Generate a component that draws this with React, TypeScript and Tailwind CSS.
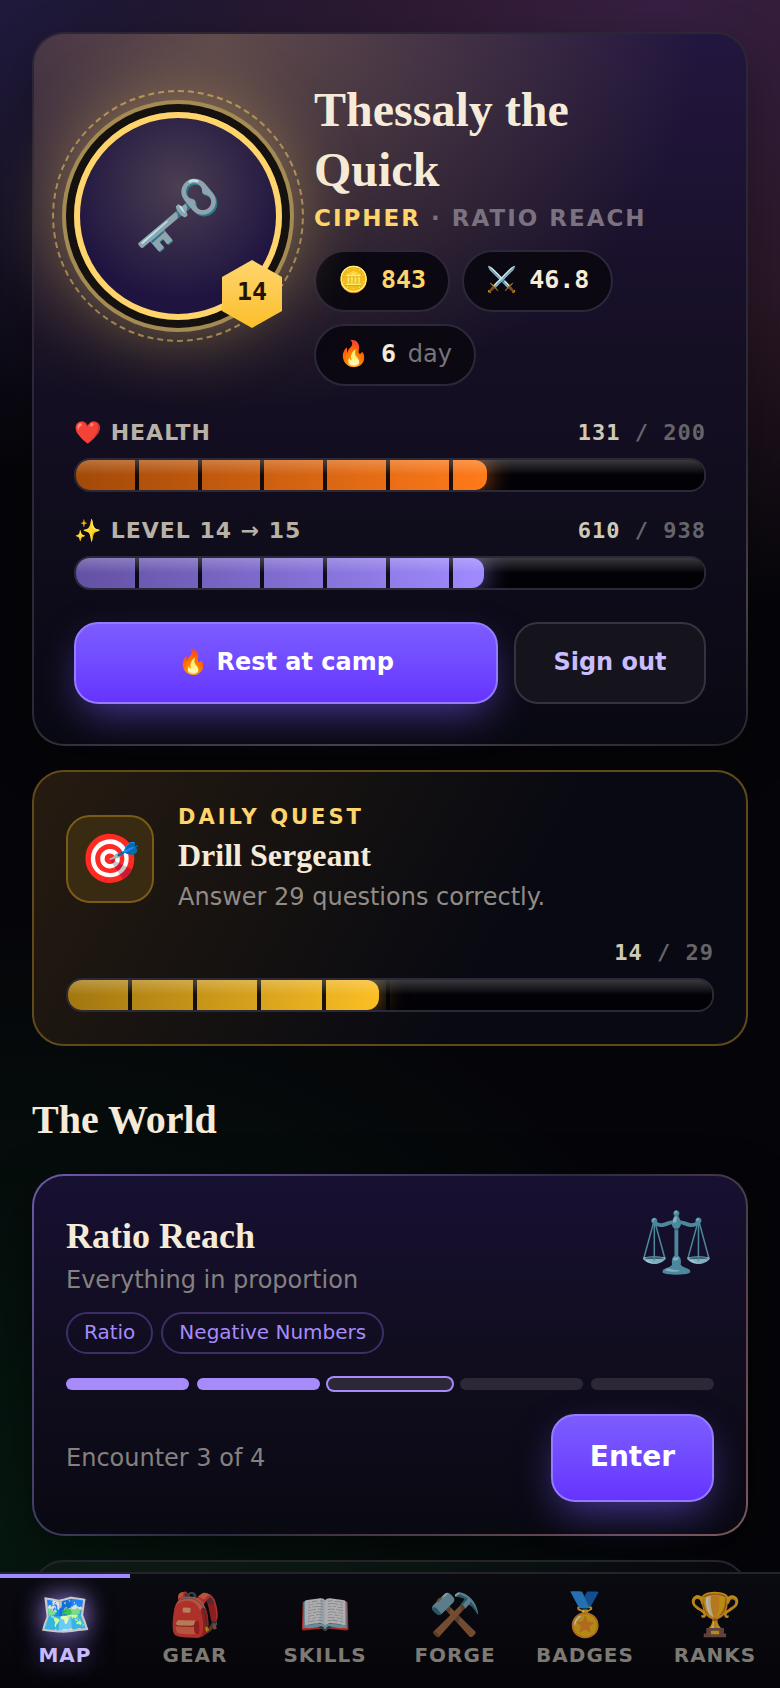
import type { ReactNode } from "react"
import clsx from "clsx"

const stats = [
  { icon: "🪙", value: "843", unit: "", gold: true },
  { icon: "⚔️", value: "46.8", unit: "", gold: false },
  { icon: "🔥", value: "6", unit: "day", gold: false },
]

const tabs = [
  { icon: "🗺️", label: "Map" },
  { icon: "🎒", label: "Gear" },
  { icon: "📖", label: "Skills" },
  { icon: "⚒️", label: "Forge" },
  { icon: "🏅", label: "Badges" },
  { icon: "🏆", label: "Ranks" },
]

const encounters = ["done", "done", "current", "locked", "locked"]

const fills = {
  health: "bg-linear-to-r from-[#a34a08] to-[#ff7a1a] shadow-[0_0_28px_rgba(255,122,26,0.8)]",
  level: "bg-linear-to-r from-[#6351a3] to-[#a08aff] shadow-[0_0_28px_rgba(160,138,255,0.75)]",
  quest: "bg-linear-to-r from-[#a27710] to-[#fbbf24] shadow-[0_0_28px_rgba(251,191,36,0.6)]",
}

function Meter({ label, value, max, tone }: { label?: ReactNode; value: number; max: number; tone: keyof typeof fills }) {
  return (
    <div>
      <div className="mb-2 flex justify-between text-[22px] leading-[34px] font-bold tracking-[1px]">
        <span className="text-[#b8b2a6] uppercase">{label}</span>
        <span className="font-['DejaVu_Sans_Mono',monospace] text-[#66646b]">
          <span className="text-[#cfc9b8]">{value}</span> / {max}
        </span>
      </div>
      <div className="relative h-[34px] overflow-hidden rounded-2xl border-2 border-[#2b2838] bg-[#020106]">
        <div className={clsx("h-full rounded-xl", fills[tone])} style={{ width: `${(value / max) * 100}%` }} />
        <div className="absolute inset-0 bg-[repeating-linear-gradient(90deg,transparent_0,transparent_calc(10%-4px),rgba(2,1,6,0.9)_calc(10%-4px),rgba(2,1,6,0.9)_10%)]" />
        <div className="absolute inset-x-0 top-0 h-1/2 bg-linear-to-b from-white/22 to-transparent" />
      </div>
    </div>
  )
}

function PrimaryButton({ className, children }: { className?: string; children: ReactNode }) {
  return (
    <button
      type="button"
      className={clsx(
        "border-2 border-[#957bff] bg-linear-to-b from-[#7d5cff] to-[#6633ff] pb-[2px] font-bold text-white shadow-[0_16px_40px_-8px_rgba(124,92,255,0.55)]",
        className,
      )}
    >
      {children}
    </button>
  )
}

function HeroCard() {
  return (
    <section className="rounded-[32px] border-2 border-transparent p-10 shadow-[0_16px_48px_rgba(0,0,0,0.3)] [background:radial-gradient(ellipse_480px_380px_at_26%_0%,rgba(255,213,107,0.28),transparent)_padding-box,linear-gradient(180deg,#23163f_0%,#150f24_45%,#090912_100%)_padding-box,linear-gradient(160deg,#2b2535_0%,#2b2938_70%,#4a3f48_85%,#25242f_100%)_border-box]">
      <div className="flex gap-8">
        <div className="relative mt-[38px] size-52 shrink-0">
          <div className="absolute -inset-[22px] rounded-full border-2 border-dashed border-[#ffd56b]/50" />
          <div className="flex size-full items-center justify-center rounded-full border-[6px] border-[#ffd56b] bg-[radial-gradient(circle_at_50%_35%,#4b3f52_0%,#1f1440_70%)] pb-[3px] text-[72px] shadow-[0_0_0_8px_#14110f,0_0_0_12px_#a48b54,0_0_72px_12px_rgba(255,213,107,0.4)]">
            <span aria-hidden="true">🗝️</span>
          </div>
          <div className="absolute right-0 -bottom-2 flex h-[68px] w-[60px] items-center justify-center bg-linear-to-b from-[#ffd56b] to-[#fbbf24] pb-1 font-['DejaVu_Sans_Mono',monospace] text-[25px] font-bold text-[#231503] [clip-path:polygon(50%_0,100%_25%,100%_75%,50%_100%,0_75%,0_25%)]">
            14
          </div>
        </div>
        <div className="min-w-0 pt-[6px]">
          <h1 className="font-['Liberation_Serif',serif] text-5xl leading-[60px] font-bold text-[#f5ebd8]">
            Thessaly the Quick
          </h1>
          <p className="text-[23px] leading-9 font-bold tracking-[2px] text-[#7b7280] uppercase">
            <span className="text-[#ffd56b]">Cipher</span> · Ratio Reach
          </p>
          <ul className="mt-[14px] flex flex-wrap gap-3">
            {stats.map((stat) => (
              <li
                key={stat.icon}
                className="flex h-[62px] items-center gap-3 rounded-full border-2 border-[#2c2739] bg-[#0b0812] px-[22px] pb-[3px] text-[25px]"
              >
                <span aria-hidden="true">{stat.icon}</span>
                <span>
                  <b
                    className={clsx(
                      "font-['DejaVu_Sans_Mono',monospace]",
                      stat.gold ? "text-[#ffd56b]" : "text-[#f5ebd8]",
                    )}
                  >
                    {stat.value}
                  </b>
                  {stat.unit && <span className="ml-1 text-2xl text-[#77747a]"> {stat.unit}</span>}
                </span>
              </li>
            ))}
          </ul>
        </div>
      </div>
      <div className="mt-[30px] flex flex-col gap-[22px]">
        <Meter label="❤️ Health" value={131} max={200} tone="health" />
        <Meter label="✨ Level 14 → 15" value={610} max={938} tone="level" />
      </div>
      <div className="mt-8 flex gap-4">
        <PrimaryButton className="h-[82px] flex-1 rounded-3xl text-2xl">🔥 Rest at camp</PrimaryButton>
        <button
          type="button"
          className="h-[82px] w-48 rounded-3xl border-2 border-[#353340] bg-[#15131c] pb-[2px] text-2xl font-bold text-[#c9bcff]"
        >
          Sign out
        </button>
      </div>
    </section>
  )
}

function QuestCard() {
  return (
    <section className="rounded-[32px] border-2 border-[#614a1a] bg-[#08080f] bg-linear-[120deg,#261b10_0%,#141110_38%,#080912_65%,#090912_100%] p-8">
      <div className="flex items-center gap-6">
        <div className="flex size-[88px] shrink-0 items-center justify-center rounded-3xl border-2 border-[#7a5c17] bg-[#392b12] pb-[3px] text-5xl">
          <span aria-hidden="true">🎯</span>
        </div>
        <div>
          <p className="text-[21px] leading-[26px] font-bold tracking-[3px] text-[#ffd56b] uppercase">Daily quest</p>
          <h2 className="font-['Liberation_Serif',serif] text-[32px] leading-[50px] font-bold text-[#f5ebd8]">
            Drill Sergeant
          </h2>
          <p className="text-2xl leading-[34px] text-[#918c86]">Answer 29 questions correctly.</p>
        </div>
      </div>
      <div className="mt-[22px]">
        <Meter value={14} max={29} tone="quest" />
      </div>
    </section>
  )
}

function RegionCard() {
  return (
    <section className="rounded-[32px] border-2 border-transparent p-8 shadow-[0_16px_48px_rgba(0,0,0,0.5)] [background:linear-gradient(180deg,#171032_0%,#110d1f_50%,#090912_100%)_padding-box,linear-gradient(135deg,#6a5aa8_0%,#2d2a3e_50%,#7d5a5a_100%)_border-box]">
      <div className="flex justify-between">
        <div>
          <h3 className="font-['Liberation_Serif',serif] text-4xl leading-[56px] font-bold text-[#f5ebd8]">
            Ratio Reach
          </h3>
          <p className="text-2xl leading-8 text-[#85817f]">Everything in proportion</p>
        </div>
        <span className="text-[60px] leading-[68px]" aria-hidden="true">
          ⚖️
        </span>
      </div>
      <ul className="mt-4 flex gap-2 text-xl text-[#a78bfa]">
        {["Ratio", "Negative Numbers"].map((topic) => (
          <li key={topic} className="flex h-[42px] items-center rounded-full border-2 border-[#3b2f66] px-4 pb-[3px]">
            {topic}
          </li>
        ))}
      </ul>
      <div className="mt-6 grid grid-cols-5 gap-2">
        {encounters.map((state, i) => (
          <div
            key={i}
            className={clsx(
              "h-3 rounded-full",
              state === "done" ? "bg-[#a78bfa]" : "bg-[#2c2838]",
              state === "current" && "ring-2 ring-[#a78bfa]",
            )}
          />
        ))}
      </div>
      <div className="mt-6 flex items-center justify-between">
        <p className="text-2xl text-[#85817f]">Encounter 3 of 4</p>
        <PrimaryButton className="h-[88px] rounded-3xl px-[37px] text-[28px]">Enter</PrimaryButton>
      </div>
    </section>
  )
}

function TabBar() {
  return (
    <nav className="grid h-[116px] shrink-0 grid-cols-6 border-t-2 border-[#24222d] bg-linear-to-b from-[#0a0a11] to-[#050509]">
      {tabs.map((tab, i) => (
        <a
          key={tab.label}
          href={`#${tab.label.toLowerCase()}`}
          aria-current={i === 0 ? "page" : undefined}
          className={clsx(
            "flex flex-col items-center border-t-4 pt-2 text-xl font-bold tracking-[1px] uppercase",
            i === 0
              ? "border-[#a08aff] text-[#c9bcff] [text-shadow:0_0_24px_rgba(167,139,250,0.7)]"
              : "border-transparent text-[#7d7973]",
          )}
        >
          <span
            className={clsx(
              "text-[42px] leading-[58px]",
              i === 0 ? "drop-shadow-[0_0_10px_rgba(167,139,250,0.3)]" : "opacity-70",
            )}
            aria-hidden="true"
          >
            {tab.icon}
          </span>
          <span className="leading-[22px]">{tab.label}</span>
        </a>
      ))}
    </nav>
  )
}

export default function App() {
  return (
    <div className="flex h-screen flex-col bg-[#050509] bg-[radial-gradient(ellipse_60%_28%_at_0%_0%,#1f1a3c,transparent),radial-gradient(ellipse_110%_36%_at_85%_0%,#361f42,#2a1726_50%,transparent),radial-gradient(ellipse_95%_36%_at_0%_90%,#06180f,transparent)] font-['DejaVu_Sans',sans-serif]">
      <main className="flex min-h-0 flex-1 flex-col gap-6 overflow-y-auto p-8 [scrollbar-width:none] *:shrink-0">
        <HeroCard />
        <QuestCard />
        <h2 className="mt-5 font-['Liberation_Serif',serif] text-[40px] leading-[60px] font-bold text-[#f5ebd8]">
          The World
        </h2>
        <RegionCard />
        <section className="h-80 rounded-[32px] border-2 border-[#24242a] bg-linear-to-r from-[#0d1a12] via-[#0a1511] to-[#07080d]" />
      </main>
      <TabBar />
    </div>
  )
}
